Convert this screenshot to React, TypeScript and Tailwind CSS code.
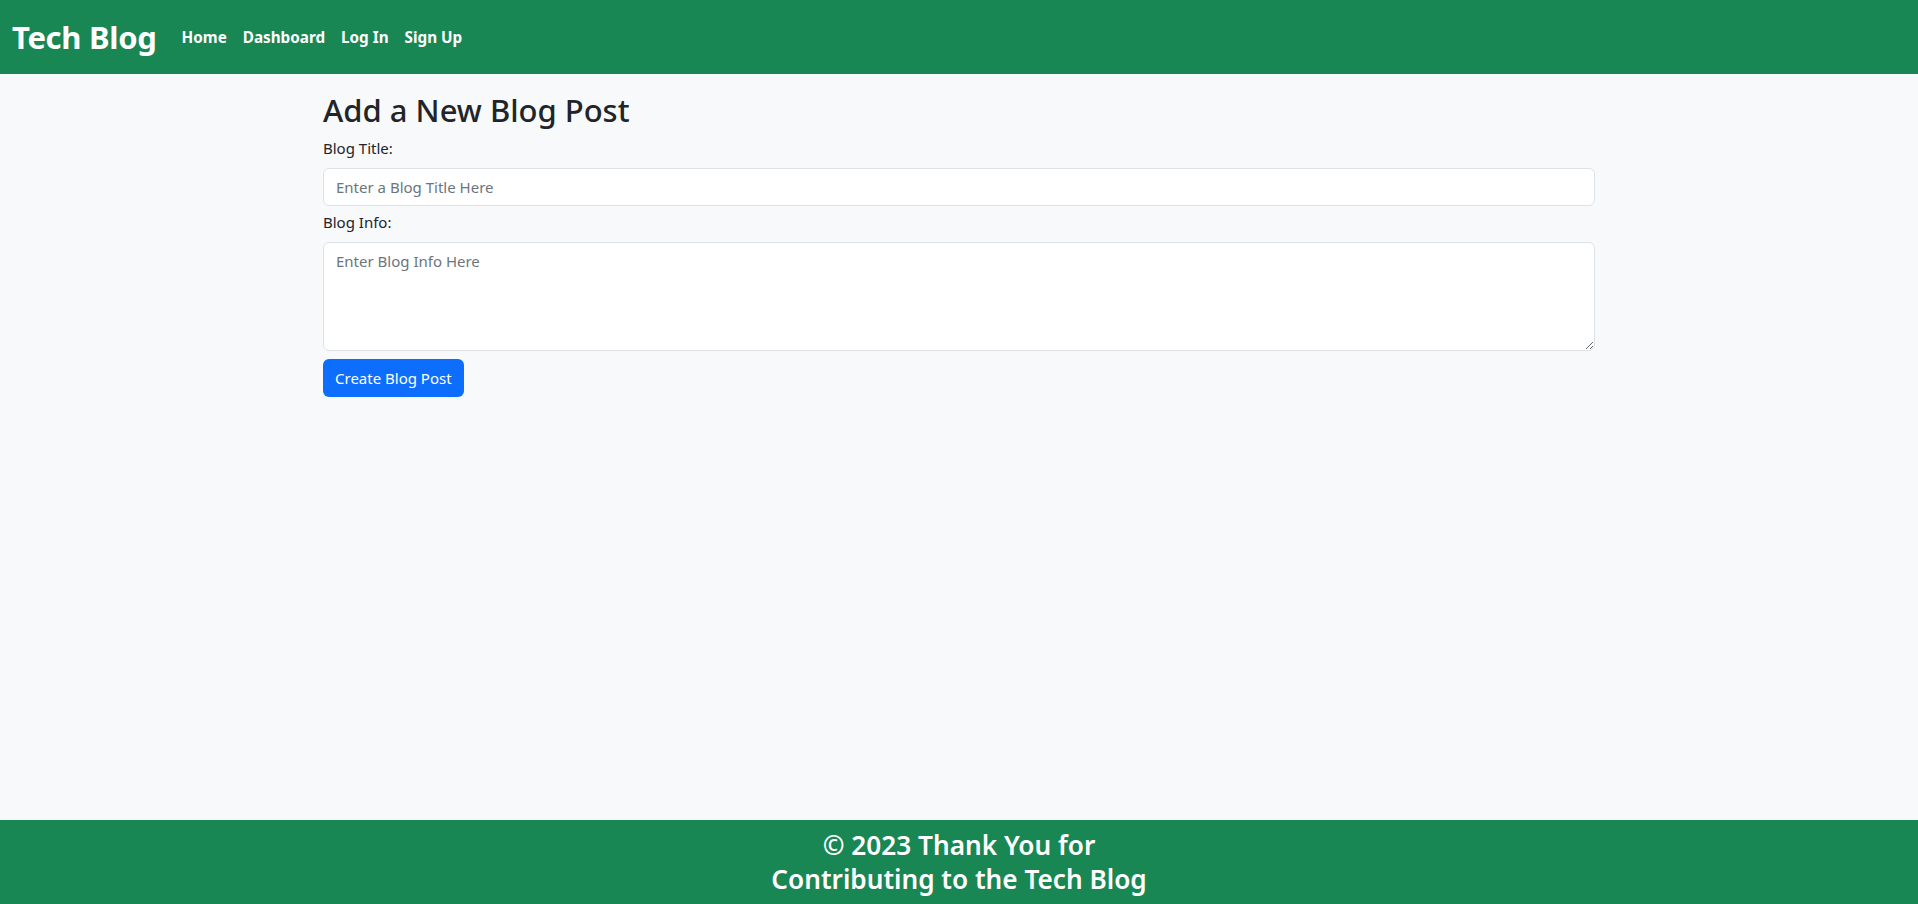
import React from "react";

export default function App() {
  const font = { fontFamily: '"Noto Sans", "Open Sans", sans-serif' };
  return (
    <div className="min-h-screen flex flex-col bg-[#f8f9fa] text-[#212529]" style={font}>
      <nav className="h-[74px] bg-[#198754] flex items-center pl-[12px]">
        <a className="text-white text-[31px] font-bold leading-none tracking-[-0.3px]">Tech Blog</a>
        <ul className="flex items-center ml-[17px]">
          {["Home", "Dashboard", "Log In", "Sign Up"].map((l) => (
            <li key={l}>
              <a className="block px-[8px] text-white text-[15.25px] font-bold leading-[24px]">{l}</a>
            </li>
          ))}
        </ul>
      </nav>
      <main className="flex-1">
        <div className="w-[1272px] mx-auto pt-[18px]">
          <h2 className="text-[31px] font-medium leading-[1.2] mb-[7px]">Add a New Blog Post</h2>
          <form className="flex flex-col">
            <label className="text-[15px] leading-[24px] mb-[8px]">Blog Title:</label>
            <input
              type="text"
              placeholder="Enter a Blog Title Here"
              className="h-[38px] w-full bg-white border border-[#dee2e6] rounded-[6px] px-[12px] text-[15px] placeholder:text-[#6c757d] outline-none"
            />
            <label className="text-[15px] leading-[24px] mt-[4px] mb-[8px]">Blog Info:</label>
            <textarea
              placeholder="Enter Blog Info Here"
              className="h-[109px] w-full bg-white border border-[#dee2e6] rounded-[6px] px-[12px] py-[6px] text-[15px] leading-[24px] placeholder:text-[#6c757d] outline-none"
            />
            <div className="mt-[8px]">
              <button
                type="button"
                className="h-[38px] px-[12px] bg-[#0d6efd] text-white text-[15px] rounded-[6px] leading-[24px]"
              >
                Create Blog Post
              </button>
            </div>
          </form>
        </div>
      </main>
      <footer className="h-[84px] bg-[#198754] flex items-center justify-center text-center">
        <h3 className="text-white text-[26.2px] font-semibold leading-[34px]">
          © 2023 Thank You for
          <br />
          Contributing to the Tech Blog
        </h3>
      </footer>
    </div>
  );
}
